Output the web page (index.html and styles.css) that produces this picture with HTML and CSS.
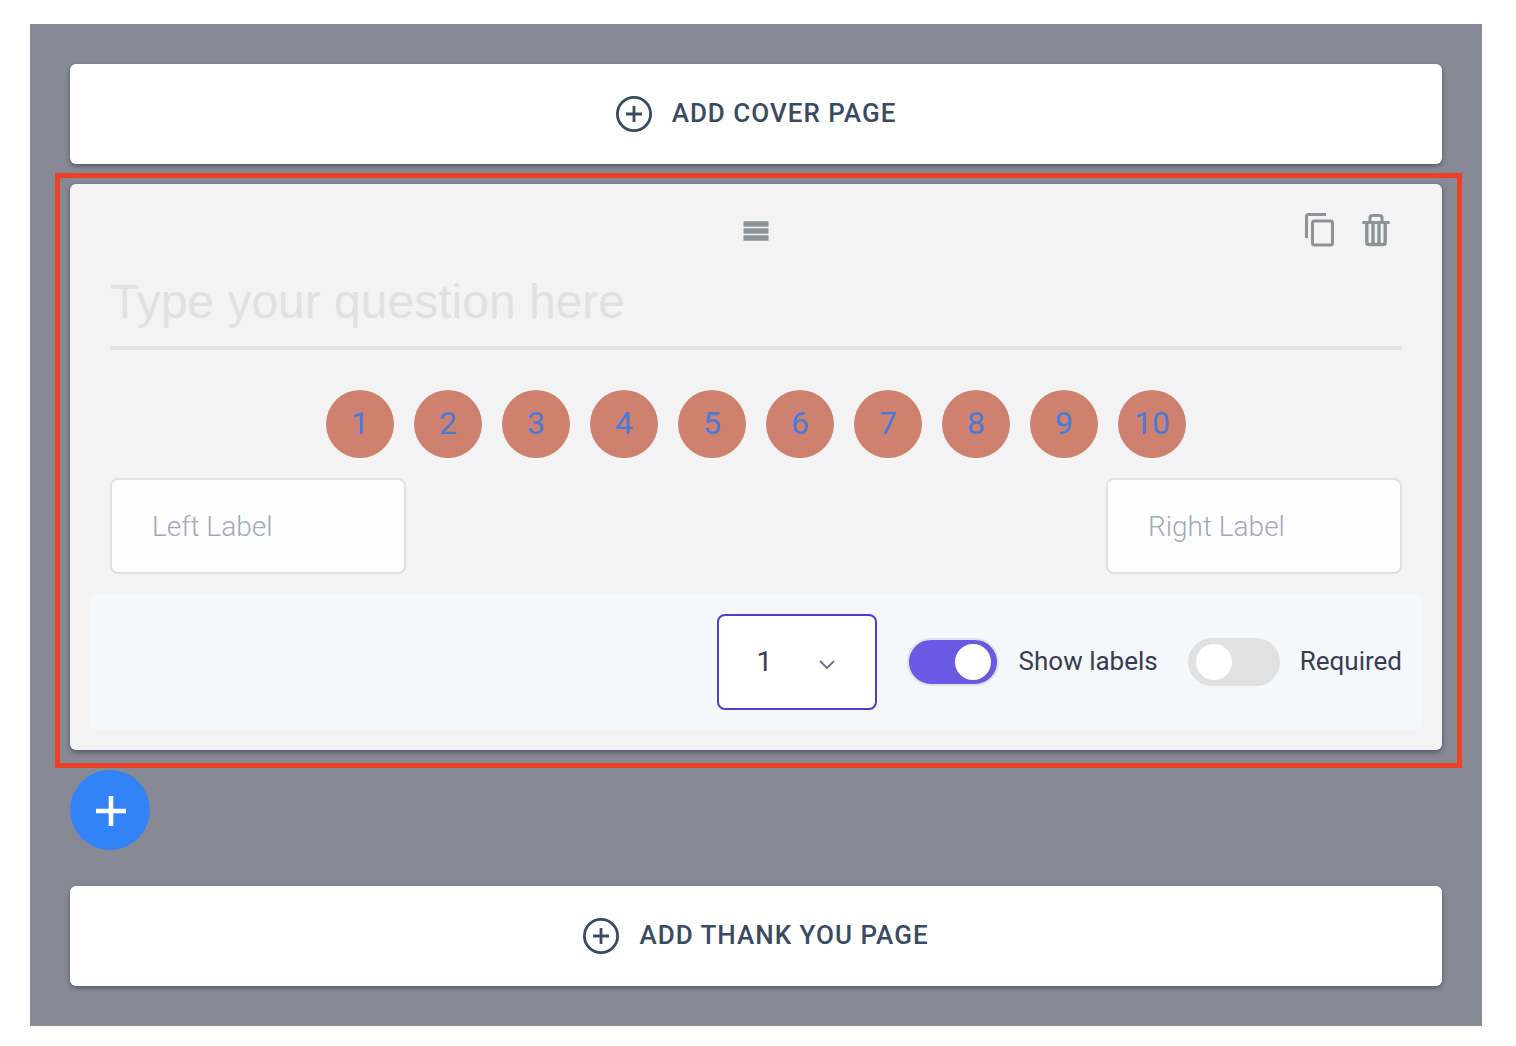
FILE: index.html
```
<!DOCTYPE html>
<html lang="en">

<head>
    <meta charset="UTF-8">
    <meta name="viewport" content="width=device-width, initial-scale=1.0">
    <link rel="stylesheet" href="styles.css">

    <title>Survey Builder</title>
</head>

<body>

    <main class="builder">

        <button type="button" class="add-page">
            <svg class="plus-icon" viewBox="0 0 36 36">
                <circle cx="18" cy="18" r="16.600" />
                <path d="M18 10v16M10 18h16" />
            </svg>
            <span>ADD COVER PAGE</span>
        </button>

        <section class="question-card">

            <div class="toolbar">
                <button type="button" class="icon-btn drag" aria-label="Move question">
                    <svg width="26" height="22" viewBox="0 0 26 22">
                        <path d="M.5 2.300h25v5.400H.5zM.5 9.300h25v5.400H.5zM.5 16.300h25v5.400H.5z" fill="#8c9497" />
                    </svg>
                </button>
                <div class="actions">
                    <button type="button" class="icon-btn" aria-label="Duplicate question">
                        <svg width="30" height="34" viewBox="0 0 30 34">
                            <path d="M22 1.500H4.500Q2.500 1.500 2.500 3.500V25" />
                            <rect x="8.500" y="8" width="20" height="24" rx="2" />
                        </svg>
                    </button>
                    <button type="button" class="icon-btn" aria-label="Delete question">
                        <svg width="28" height="34" viewBox="0 0 28 34">
                            <path d="M1.500 9.500h25" stroke-linecap="round" />
                            <path d="M8 9V4.500Q8 2.500 10 2.500h8Q20 2.500 20 4.500V9" />
                            <path d="M4.800 10v19.500q0 2 2 2h14.400q2 0 2-2V10M11 10v20.500M17 10v20.500" stroke-width="3.400" />
                        </svg>
                    </button>
                </div>
            </div>

            <div class="question">
                <input type="text" class="question-input" placeholder="Type your question here" aria-label="Question">

                <div class="scale">
                    <button type="button">1</button>
                    <button type="button">2</button>
                    <button type="button">3</button>
                    <button type="button">4</button>
                    <button type="button">5</button>
                    <button type="button">6</button>
                    <button type="button">7</button>
                    <button type="button">8</button>
                    <button type="button">9</button>
                    <button type="button">10</button>
                </div>

                <div class="scale-labels">
                    <input type="text" placeholder="Left Label" aria-label="Left label">
                    <input type="text" placeholder="Right Label" aria-label="Right label">
                </div>
            </div>

            <div class="settings">
                <div class="start-select">
                    <select aria-label="Scale starts at">
                        <option>0</option>
                        <option selected>1</option>
                    </select>
                    <svg width="16" height="9" viewBox="0 0 16 9">
                        <path d="M1 1l7 7 7-7" />
                    </svg>
                </div>
                <label class="switch">
                    <input type="checkbox" checked>
                    <span>Show labels</span>
                </label>
                <label class="switch">
                    <input type="checkbox">
                    <span>Required</span>
                </label>
            </div>

        </section> <!-- question card end -->

        <button type="button" class="add-question" aria-label="Add question">
            <svg width="32" height="32" viewBox="0 0 32 32">
                <path d="M17 2v30M2 17h30" stroke="#fff" stroke-width="4.600" />
            </svg>
        </button>

        <button type="button" class="add-page">
            <svg class="plus-icon" viewBox="0 0 36 36">
                <circle cx="18" cy="18" r="16.600" />
                <path d="M18 10v16M10 18h16" />
            </svg>
            <span>ADD THANK YOU PAGE</span>
        </button>

    </main> <!-- builder end -->

</body>

</html>
```
FILE: styles.css
```
*{
    padding: 0;
    margin: 0;
    box-sizing: border-box;
}
body{
    background: #fff;
    font-family: Roboto, Arial, sans-serif;
    font-size: 26px;
}
button, input, select{
    font-family: inherit;
    font-size: inherit;
}
button{
    border: none;
    background: none;
    cursor: pointer;
}
svg{
    display: block;
    fill: none;
}

.builder{
    margin: 24px 34px 20px 30px;
    padding: 40px;
    background: #878995;
}

/* cover and thank you buttons */
.add-page{
    display: flex;
    align-items: center;
    justify-content: center;
    gap: 20px;
    width: 100%;
    height: 100px;
    border-radius: 6px;
    background: #fff;
    box-shadow: 0 2px 4px rgba(40, 42, 60, .5);
    color: #3a4a61;
    font-weight: 500;
    letter-spacing: 1px;
}
.add-page span, .switch span{
    padding-bottom: 2px;
}
.plus-icon{
    width: 36px;
    height: 36px;
    stroke: #3a4a61;
    stroke-width: 2.8;
}

/* question */
.question-card{
    position: relative;
    margin: 20px 0;
    padding: 20px;
    border-radius: 6px;
    background: #f3f3f3;
    box-shadow: 0 2px 5px rgba(40, 42, 60, .6);
}
/* selection frame round the card */
.question-card::after{
    content: "";
    position: absolute;
    top: -11px;
    right: -20px;
    bottom: -18px;
    left: -15px;
    border: 5px solid #ec4127;
    pointer-events: none;
}
.toolbar{
    display: grid;
    grid-template-columns: 1fr auto 1fr;
    align-items: center;
    height: 52px;
    padding: 0 32px;
}
.drag{
    grid-column: 2;
}
.actions{
    display: flex;
    justify-content: flex-end;
    gap: 28px;
}
.icon-btn svg{
    stroke: #8c9497;
    stroke-width: 3;
}
.drag svg{
    stroke: none;
}
.question{
    padding: 0 20px;
}
.question-input{
    display: block;
    width: 100%;
    height: 94px;
    border: none;
    border-bottom: 4px solid #e1e1e1;
    outline: none;
    background: none;
    font-family: "Liberation Sans", Arial, sans-serif;
    font-size: 48px;
}
.question-input::placeholder{
    color: #e1e1e1;
}

.scale{
    display: flex;
    justify-content: center;
    gap: 20px;
    margin: 40px 0 20px;
}
.scale button{
    width: 68px;
    height: 68px;
    padding-bottom: 2px;
    border-radius: 50%;
    background: #cf8170;
    color: #487bd8;
    font-size: 32px;
}

.scale-labels{
    display: flex;
    justify-content: space-between;
}
.scale-labels input{
    width: 296px;
    height: 96px;
    padding: 0 40px;
    border: 2px solid #e1e1e1;
    border-radius: 8px;
    background: #fdfdfd;
    font-size: 28px;
    font-weight: 300;
}
.scale-labels input::placeholder{
    color: #a3a8bb;
}

/* settings bar */
.settings{
    display: flex;
    align-items: center;
    justify-content: flex-end;
    gap: 30px;
    margin-top: 20px;
    padding: 20px;
    border-radius: 6px;
    background: #f4f8fb;
    color: #3a3b53;
}
.start-select{
    position: relative;
}
.start-select select{
    display: block;
    appearance: none;
    width: 160px;
    height: 96px;
    padding: 0 38px 2px;
    border: 2px solid #533bcb;
    border-radius: 8px;
    outline: none;
    background: #fff;
    color: #3a3b53;
    font-size: 28px;
}
.start-select svg{
    position: absolute;
    top: 46px;
    right: 42px;
    stroke: #6f7690;
    stroke-width: 2;
    pointer-events: none;
}
.switch{
    display: flex;
    align-items: center;
    gap: 20px;
    cursor: pointer;
}
.switch input{
    appearance: none;
    width: 92px;
    height: 48px;
    padding: 4px 6px;
    border: 2px solid #e1e1e1;
    border-radius: 24px;
    background: #e1e1e1;
}
.switch input::before{
    content: "";
    display: block;
    width: 36px;
    height: 36px;
    border-radius: 50%;
    background: #fff;
}
.switch input:checked{
    background: #6a59e3;
}
.switch input:checked::before{
    margin-left: auto;
}

.add-question{
    display: flex;
    align-items: center;
    justify-content: center;
    width: 80px;
    height: 80px;
    margin-bottom: 36px;
    border-radius: 50%;
    background: #3282f8;
}
```
